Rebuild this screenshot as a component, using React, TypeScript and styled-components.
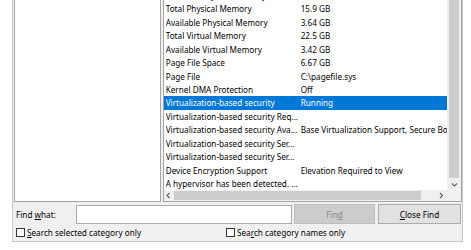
import React from "react";
import styled, { createGlobalStyle } from "styled-components";

const ROW_H = 13.46;

type Row = { item: string; value: string };

const rows: Row[] = [
  { item: "Installed Physical Memory (RAM)", value: "16.0 GB" },
  { item: "Total Physical Memory", value: "15.9 GB" },
  { item: "Available Physical Memory", value: "3.64 GB" },
  { item: "Total Virtual Memory", value: "22.5 GB" },
  { item: "Available Virtual Memory", value: "3.42 GB" },
  { item: "Page File Space", value: "6.67 GB" },
  { item: "Page File", value: "C:\\pagefile.sys" },
  { item: "Kernel DMA Protection", value: "Off" },
  { item: "Virtualization-based security", value: "Running" },
  { item: "Virtualization-based security Req...", value: "" },
  {
    item: "Virtualization-based security Ava...",
    value: "Base Virtualization Support, Secure Boot, DMA Protection",
  },
  { item: "Virtualization-based security Ser...", value: "" },
  { item: "Virtualization-based security Ser...", value: "" },
  { item: "Device Encryption Support", value: "Elevation Required to View" },
  { item: "A hypervisor has been detected. ...", value: "" },
];

const SELECTED = 8;

const GlobalStyle = createGlobalStyle`
  html, body {
    margin: 0;
    padding: 0;
    background: #ffffff;
  }
  body {
    font-family: "Noto Sans", "Liberation Sans", sans-serif;
    font-size: 8.2px;
    color: #000000;
  }
`;

const Dialog = styled.div`
  margin-left: 12px;
  width: 451px;
  height: 242px;
  box-sizing: border-box;
  border: 1px solid #c6c6c6;
  border-top: none;
  background: #f0f0f0;
  display: flex;
  flex-direction: column;
`;

const Panes = styled.div`
  display: flex;
  gap: 2px;
  height: 202px;
  padding-left: 1px;
`;

const Pane = styled.div`
  box-sizing: border-box;
  border: 1px solid #a5a5a5;
  border-top: none;
  background: #ffffff;
`;

const TreePane = styled(Pane)`
  width: 147px;
`;

const ListPane = styled(Pane)`
  width: 300px;
  display: grid;
  grid-template-columns: 1fr 14px;
  grid-template-rows: 1fr 11px;
`;

const Viewport = styled.div`
  overflow: hidden;
`;

// list is scrolled down a little, so the first row is half hidden
const ListBody = styled.div`
  margin-top: -11.2px;
`;

const ListRow = styled.div<{ $selected?: boolean }>`
  display: grid;
  grid-template-columns: 135px max-content;
  height: ${ROW_H}px;
  line-height: ${ROW_H}px;
  padding-left: 2px;
  white-space: nowrap;
  background: ${(p) => (p.$selected ? "#0078d7" : "transparent")};
  color: ${(p) => (p.$selected ? "#ffffff" : "#000000")};
`;

const Cell = styled.span`
  overflow: hidden;
`;

const VScroll = styled.div`
  background: #f0f0f0;
  display: flex;
  flex-direction: column;
  align-items: center;
`;

const VThumb = styled.div`
  width: 10px;
  height: 178px;
  background: #cdcdcd;
`;

const ArrowBox = styled.div<{ $w: number; $h: number }>`
  width: ${(p) => p.$w}px;
  height: ${(p) => p.$h}px;
  display: flex;
  align-items: center;
  justify-content: center;
  flex: none;
`;

const HScroll = styled.div`
  background: #f0f0f0;
  display: flex;
  align-items: center;
`;

const HThumb = styled.div`
  width: 247px;
  height: 9px;
  background: #cdcdcd;
`;

const Spacer = styled.div`
  flex: 1;
`;

const Corner = styled.div`
  background: #f0f0f0;
`;

const FindRow = styled.div`
  display: flex;
  align-items: center;
  padding: 2px 1px 0 3px;
  height: 20px;
`;

const Label = styled.span`
  width: 60px;
  flex: none;
`;

const TextBox = styled.div`
  width: 216px;
  height: 19px;
  box-sizing: border-box;
  background: #ffffff;
  border: 1px solid #adadad;
  margin-right: 2px;
`;

const Button = styled.div<{ $disabled?: boolean; $w: number }>`
  width: ${(p) => p.$w}px;
  height: 20px;
  box-sizing: border-box;
  display: flex;
  align-items: center;
  justify-content: center;
  background: ${(p) => (p.$disabled ? "#cccccc" : "#e1e1e1")};
  border: 1px solid ${(p) => (p.$disabled ? "#bfbfbf" : "#adadad")};
  color: ${(p) => (p.$disabled ? "#8b8b8b" : "#000000")};
  margin-right: 3px;
  &:last-child {
    margin-right: 0;
  }
`;

const CheckRow = styled.div`
  display: flex;
  align-items: center;
  padding: 2px 0 0 3px;
  height: 12px;
`;

const Check = styled.label<{ $w: number }>`
  display: flex;
  align-items: center;
  gap: 1px;
  width: ${(p) => p.$w}px;
`;

const Box = styled.span`
  width: 9px;
  height: 9px;
  box-sizing: border-box;
  border: 1px solid #333333;
  background: #ffffff;
  margin-right: 1px;
  flex: none;
`;

function Chevron({ dir }: { dir: "left" | "right" | "down" }) {
  const pts =
    dir === "left"
      ? "3.5,1 1,3.5 3.5,6"
      : dir === "right"
      ? "1,1 3.5,3.5 1,6"
      : "1,1.5 3.5,4 6,1.5";
  const w = dir === "down" ? 7 : 5;
  const h = dir === "down" ? 5 : 7;
  return (
    <svg width={w} height={h} viewBox={`0 0 ${w} ${h}`}>
      <polyline points={pts} fill="none" stroke="#606060" strokeWidth="1.1" />
    </svg>
  );
}

export default function App() {
  return (
    <>
      <GlobalStyle />
      <Dialog>
        <Panes>
          <TreePane />
          <ListPane>
            <Viewport>
              <ListBody>
                {rows.map((r, i) => (
                  <ListRow key={i} $selected={i === SELECTED}>
                    <Cell>{r.item}</Cell>
                    <span>{r.value}</span>
                  </ListRow>
                ))}
              </ListBody>
            </Viewport>
            <VScroll>
              <VThumb />
              <ArrowBox $w={13} $h={12}>
                <Chevron dir="down" />
              </ArrowBox>
            </VScroll>
            <HScroll>
              <ArrowBox $w={10} $h={11}>
                <Chevron dir="left" />
              </ArrowBox>
              <HThumb />
              <Spacer />
              <ArrowBox $w={12} $h={11}>
                <Chevron dir="right" />
              </ArrowBox>
            </HScroll>
            <Corner />
          </ListPane>
        </Panes>
        <FindRow>
          <Label>
            Find <u>w</u>hat:
          </Label>
          <TextBox />
          <Button $disabled $w={81}>
            <span>
              Fin<u>d</u>
            </span>
          </Button>
          <Button $w={83}>
            <span>
              <u>C</u>lose Find
            </span>
          </Button>
        </FindRow>
        <CheckRow>
          <Check $w={210}>
            <Box />
            <span>
              <u>S</u>earch selected category only
            </span>
          </Check>
          <Check $w={200}>
            <Box />
            <span>
              Sea<u>r</u>ch category names only
            </span>
          </Check>
        </CheckRow>
      </Dialog>
    </>
  );
}
